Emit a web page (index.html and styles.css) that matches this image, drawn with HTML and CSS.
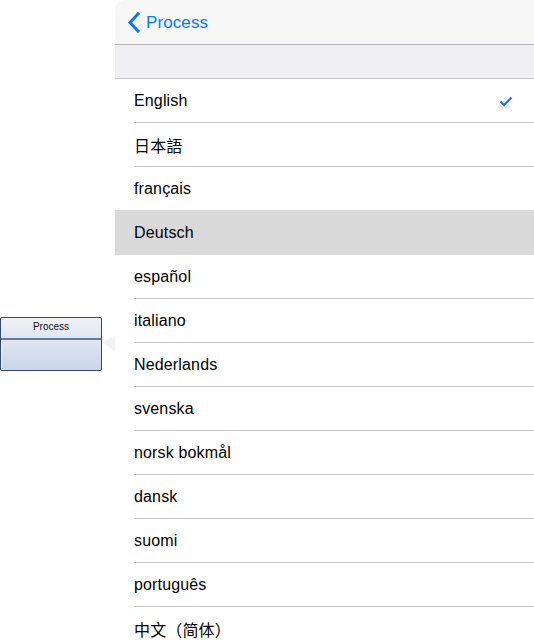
FILE: index.html
```html
<!DOCTYPE html>
<html lang="en">
<head>
    <meta charset="UTF-8">
    <meta name="viewport" content="width=device-width, initial-scale=1.0">
    <title>Process Language</title>
    <link rel="stylesheet" href="styles.css">
</head>
<body>
    <div class="stage">
        <!-- Diagram shape -->
        <div class="canvas">
            <div class="shape">
                <div class="shape-title">Process</div>
                <div class="shape-body"></div>
            </div>
            <div class="arrow"></div>
        </div>

        <!-- Language popover -->
        <div class="popover">
            <div class="nav-bar">
                <svg class="back-chevron" width="13" height="21" viewBox="0 0 13 21">
                    <path d="M11 2 L3 10.5 L11 19" fill="none" stroke="#007aff" stroke-width="3" stroke-linecap="square"/>
                </svg>
                <span class="back-label">Process</span>
            </div>
            <div class="section-header"></div>
            <ul class="language-list">
                <li class="row">English
                    <svg class="check" width="14" height="11" viewBox="0 0 14 11">
                        <path d="M1.5 5.5 L5 9 L12.5 1.5" fill="none" stroke="#007aff" stroke-width="2"/>
                    </svg>
                </li>
                <li class="row">日本語</li>
                <li class="row">français</li>
                <li class="row selected">Deutsch</li>
                <li class="row">español</li>
                <li class="row">italiano</li>
                <li class="row">Nederlands</li>
                <li class="row">svenska</li>
                <li class="row">norsk bokmål</li>
                <li class="row">dansk</li>
                <li class="row">suomi</li>
                <li class="row">português</li>
                <li class="row">中文（简体）</li>
            </ul>
        </div>
    </div>
</body>
</html>
```

FILE: styles.css
```css
* {
    box-sizing: border-box;
    margin: 0;
    padding: 0;
    font-family: "Liberation Sans", Arial, "Noto Sans CJK SC", sans-serif;
}

body {
    background-color: #fff;
    color: #000;
    width: 534px;
    height: 644px;
    overflow: hidden;
}

.stage {
    display: flex;
    height: 644px;
}

.canvas {
    width: 115px;
    display: flex;
    align-items: flex-start;
    padding-top: 317px;
}

.shape {
    width: 102px;
    height: 54px;
    border: 1px solid #34466b;
    border-radius: 2px;
    box-shadow: inset 1px 1px 0 #f4f6fa;
    background: linear-gradient(#f0f2f6, #c8d5e8);
    display: flex;
    flex-direction: column;
}

.shape-title {
    height: 22px;
    border-bottom: 2px solid #6a7b96;
    font-size: 10px;
    text-align: center;
    padding-top: 3px;
    color: #111;
}

.arrow {
    width: 0;
    height: 0;
    margin-top: 18px;
    margin-left: 1px;
    border-top: 8px solid transparent;
    border-bottom: 8px solid transparent;
    border-right: 12px solid #f2f2f2;
}

.popover {
    width: 419px;
    border-top-left-radius: 10px;
    overflow: hidden;
    background-color: #fff;
}

.nav-bar {
    height: 45px;
    background-color: #f7f7f7;
    border-bottom: 1px solid #b2b2b2;
    display: flex;
    align-items: center;
    padding-left: 12px;
    padding-top: 1px;
}

.back-chevron {
    margin-right: 6px;
}

.back-label {
    color: #007aff;
    font-size: 17px;
    letter-spacing: 0.1px;
}

.section-header {
    height: 34px;
    background-color: #efeff4;
    border-bottom: 1px solid #c8c7cc;
}

.language-list {
    list-style: none;
}

.row {
    height: 44px;
    padding-left: 19px;
    padding-right: 21px;
    display: flex;
    align-items: center;
    justify-content: space-between;
    font-size: 16px;
    letter-spacing: 0.15px;
    position: relative;
}

.row::after {
    content: "";
    position: absolute;
    left: 19px;
    right: 0;
    bottom: 0;
    border-bottom: 1px solid #c8c7cc;
}

.row.selected {
    background-color: #d9d9d9;
    margin-top: -1px;
    height: 45px;
}

.row.selected::after {
    display: none;
}
```
